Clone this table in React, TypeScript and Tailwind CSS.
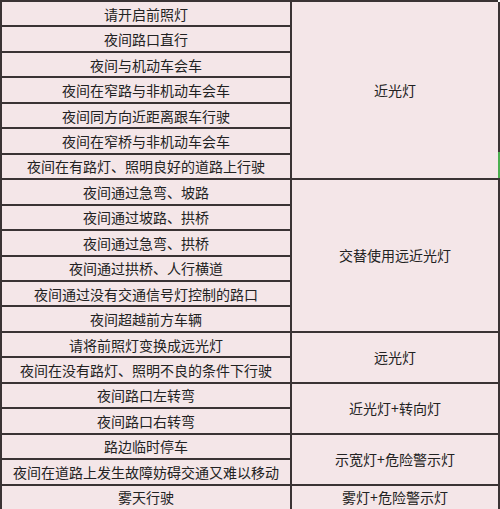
const LEFT_ROWS = [
  '请开启前照灯',
  '夜间路口直行',
  '夜间与机动车会车',
  '夜间在窄路与非机动车会车',
  '夜间同方向近距离跟车行驶',
  '夜间在窄桥与非机动车会车',
  '夜间在有路灯、照明良好的道路上行驶',
  '夜间通过急弯、坡路',
  '夜间通过坡路、拱桥',
  '夜间通过急弯、拱桥',
  '夜间通过拱桥、人行横道',
  '夜间通过没有交通信号灯控制的路口',
  '夜间超越前方车辆',
  '请将前照灯变换成远光灯',
  '夜间在没有路灯、照明不良的条件下行驶',
  '夜间路口左转弯',
  '夜间路口右转弯',
  '路边临时停车',
  '夜间在道路上发生故障妨碍交通又难以移动',
  '雾天行驶',
];

// right column groups: label + how many rows it covers
const GROUPS = [
  { label: '近光灯', span: 'row-span-7', start: 'row-start-1' },
  { label: '交替使用远近光灯', span: 'row-span-6', start: 'row-start-8' },
  { label: '远光灯', span: 'row-span-2', start: 'row-start-14' },
  { label: '近光灯+转向灯', span: 'row-span-2', start: 'row-start-16' },
  { label: '示宽灯+危险警示灯', span: 'row-span-2', start: 'row-start-18' },
  { label: '雾灯+危险警示灯', span: 'row-span-1', start: 'row-start-20' },
];

export default function App() {
  return (
    <div className="w-[500px] h-[509px] overflow-hidden bg-white flex">
      <div
        className="w-[498px] h-[511px] shrink-0 grid grid-cols-[290px_208px] grid-rows-[repeat(20,minmax(0,1fr))] border-t-2 border-l-2 border-[#3a3334] bg-[#f4e6e8] text-[#222] text-[14px] leading-none"
        style={{ fontFamily: '"Noto Sans CJK SC", "Noto Sans", sans-serif' }}
      >
        {LEFT_ROWS.map((text, i) => (
          <div
            key={i}
            className="col-start-1 flex items-center justify-center border-r-2 border-b-2 border-[#3a3334] whitespace-nowrap"
            style={{ gridRowStart: i + 1 }}
          >
            {text}
          </div>
        ))}
        {GROUPS.map((g) => (
          <div
            key={g.label + g.start}
            className={`col-start-2 ${g.start} ${g.span} flex items-center justify-center border-r-2 border-b-2 border-[#3a3334]`}
          >
            {g.label}
          </div>
        ))}
      </div>
      <div className="flex-1 pt-[152px]">
        <div className="h-[26px] bg-[#4caf50]" />
      </div>
    </div>
  );
}
